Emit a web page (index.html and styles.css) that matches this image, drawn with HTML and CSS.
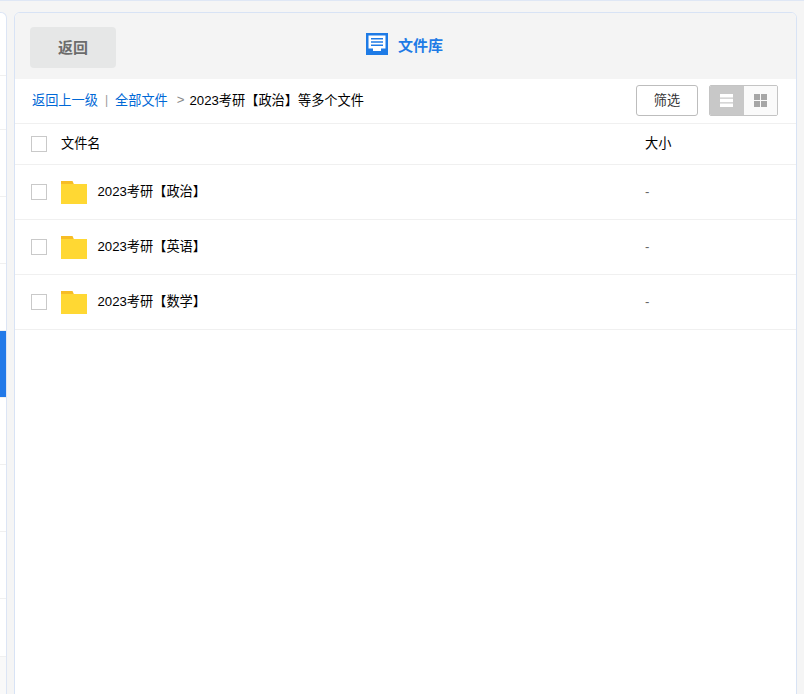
FILE: index.html
```html
<!DOCTYPE html>
<html lang="zh">
<head>
<meta charset="utf-8">
<title>文件库</title>
<link rel="stylesheet" href="styles.css">
</head>
<body>
<div class="page">
  <aside class="side">
    <div class="side-row side-row-first"></div>
    <div class="side-row side-row-short"></div>
    <div class="side-row"></div>
    <div class="side-row"></div>
    <div class="side-row"></div>
    <div class="side-row side-row-active"></div>
    <div class="side-row"></div>
    <div class="side-row"></div>
    <div class="side-row"></div>
    <div class="side-row side-row-last"></div>
    <div class="side-rest"></div>
  </aside>
  <main class="panel">
    <header class="panel-head">
      <button class="back-btn">返回</button>
      <div class="panel-title">
        <svg class="title-icon" width="22" height="22" viewBox="0 0 22 22"><path fill="#1e7be6" d="M0 0h22v22H0z"/><path fill="#fff" d="M2.500 2.500h17V15.500h-4.500v2.500h-8v-2.500H2.500z"/><path fill="#1e7be6" d="M5 5h12v1.600H5zM5 8.200h12v1.600H5zM5 11.400h12v1.600H5z"/></svg>
        <span>文件库</span>
      </div>
    </header>
    <div class="toolbar">
      <nav class="crumbs">
        <a class="crumb-link">返回上一级</a>
        <span class="crumb-bar">|</span>
        <a class="crumb-link">全部文件</a>
        <span class="crumb-gt">&gt;</span>
        <span class="crumb-current">2023考研【政治】等多个文件</span>
      </nav>
      <button class="filter-btn">筛选</button>
      <div class="view-toggle">
        <span class="view-opt view-opt-on">
          <svg width="13" height="13" viewBox="0 0 13 13"><path fill="#fff" d="M0 0h13v3.500H0zM0 4.700h13v3.600H0zM0 9.500h13V13H0z"/></svg>
        </span>
        <span class="view-opt">
          <svg width="13" height="13" viewBox="0 0 13 13"><path fill="#a6a6a6" d="M0 0h6v6H0zM7 0h6v6H7zM0 7h6v6H0zM7 7h6v6H7z"/></svg>
        </span>
      </div>
    </div>
    <div class="row row-head">
      <span class="check"></span>
      <span class="name">文件名</span>
      <span class="size">大小</span>
    </div>
    <div class="row row-file">
      <span class="check"></span>
      <svg class="folder" width="26" height="23" viewBox="0 0 26 23"><path fill="#f7bd25" d="M0 0h11.500l1.500 3.500H0z"/><path fill="#ffd833" d="M0 3h26v20H0z"/></svg>
      <span class="file-name">2023考研【政治】</span>
      <span class="size size-dash">-</span>
    </div>
    <div class="row row-file">
      <span class="check"></span>
      <svg class="folder" width="26" height="23" viewBox="0 0 26 23"><path fill="#f7bd25" d="M0 0h11.500l1.500 3.500H0z"/><path fill="#ffd833" d="M0 3h26v20H0z"/></svg>
      <span class="file-name">2023考研【英语】</span>
      <span class="size size-dash">-</span>
    </div>
    <div class="row row-file">
      <span class="check"></span>
      <svg class="folder" width="26" height="23" viewBox="0 0 26 23"><path fill="#f7bd25" d="M0 0h11.500l1.500 3.500H0z"/><path fill="#ffd833" d="M0 3h26v20H0z"/></svg>
      <span class="file-name">2023考研【数学】</span>
      <span class="size size-dash">-</span>
    </div>
  </main>
</div>
</body>
</html>
```
FILE: styles.css
```css
* { box-sizing: border-box; }
html, body { margin: 0; height: 100%; overflow: hidden; }
body {
  background: #f5f5f5;
  font-family: "Liberation Sans", "Noto Sans CJK SC", sans-serif;
  font-size: 13.2px;
  color: #000;
}
.page {
  height: 694px;
  display: flex;
  align-items: flex-start;
  gap: 7px;
  padding-top: 12px;
  box-shadow: inset 0 1px 0 #dfe7f5;
}
.side {
  width: 7px;
  height: 700px;
  display: flex;
  flex-direction: column;
  background: #fff;
  border: 1px solid #dce5f5;
  border-left: 0;
  border-radius: 0 6px 0 0;
  overflow: hidden;
}
.side-row { height: 67px; flex: none; border-bottom: 1px solid #f0f0f0; }
.side-row-first { height: 63px; }
.side-row-short { height: 54px; }
.side-row-active { background: #2279e8; background-clip: padding-box; }
.side-row-last { height: 58px; }
.side-rest { flex: 1; background: #f9f9f9; }
.panel {
  width: 783px;
  height: 700px;
  background: #fff;
  border: 1px solid #d8e3f5;
  border-radius: 6px 6px 0 0;
  overflow: hidden;
}
.panel-head {
  height: 66px;
  background: #f4f4f4;
  position: relative;
  padding: 14px 15px 0;
}
.back-btn {
  display: block;
  width: 86px;
  height: 41px;
  border: 0;
  border-radius: 4px;
  background: #e6e7e7;
  color: #6c6c6c;
  font: bold 15px "Liberation Sans", "Noto Sans CJK SC", sans-serif;
  padding: 0 0 3px;
}
.panel-title {
  position: absolute;
  left: 351px;
  top: 20px;
  display: flex;
  align-items: center;
  gap: 10px;
  color: #1e7be6;
  font-size: 15px;
  font-weight: bold;
}
.title-icon { display: block; }
.toolbar {
  height: 45px;
  display: flex;
  align-items: center;
  padding: 0 18px 1px 17px;
  border-bottom: 1px solid #f0f0f0;
}
.crumbs { flex: 1; display: flex; align-items: center; padding-bottom: 2px; }
.crumb-link { color: #0068d6; }
.crumb-bar { color: #999; margin: 0 7px; font-size: 12px; }
.crumb-gt { color: #888; margin: 0 5px 0 9px; }
.filter-btn {
  width: 62px;
  height: 31px;
  margin-right: 11px;
  padding: 0 0 3px;
  background: #fff;
  border: 1px solid #bdbdbd;
  border-radius: 3px;
  color: #333;
  font: 13.2px "Liberation Sans", "Noto Sans CJK SC", sans-serif;
}
.view-toggle {
  width: 69px;
  height: 31px;
  display: flex;
  border: 1px solid #c4c4c4;
  border-radius: 2px;
  overflow: hidden;
}
.view-opt { flex: 1; display: flex; align-items: center; justify-content: center; background: #fafafa; }
.view-opt-on { background: #c8c8c8; }
.row {
  display: flex;
  align-items: center;
  padding-left: 16px;
  border-bottom: 1px solid #f0f0f0;
}
.row-head { height: 41px; }
.row-file { height: 55px; }
.check {
  width: 16px;
  height: 16px;
  border: 1px solid #c9c9c9;
  background: #fff;
  flex: none;
}
.name, .file-name, .size { padding-bottom: 4px; }
.name { margin-left: 14px; width: 584px; }
.folder { margin-left: 14px; flex: none; }
.file-name { margin-left: 10.500px; width: 547.500px; }
.size-dash { color: #666; padding-bottom: 2px; }
```
